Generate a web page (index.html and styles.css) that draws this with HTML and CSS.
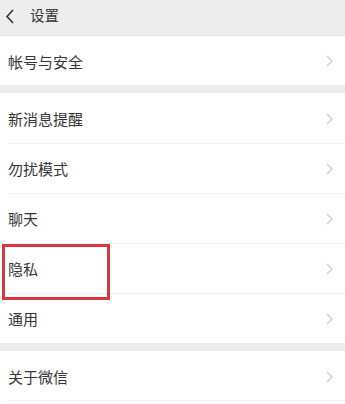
FILE: index.html
```html
<!DOCTYPE html>
<html lang="zh-CN">
<head>
<meta charset="utf-8">
<link rel="stylesheet" href="styles.css">
</head>
<body>
<header class="topbar">
  <svg class="back" width="10" height="15" viewBox="0 0 10 15"><polyline points="8,1 2,7.5 8,14" fill="none" stroke="#333" stroke-width="1.6"/></svg>
  <span class="title">设置</span>
</header>
<section class="group first">
  <div class="row"><span class="label">帐号与安全</span><svg class="chev" width="7" height="12" viewBox="0 0 7 12"><polyline points="1,1 6,6 1,11" fill="none" stroke="#cfcfcf" stroke-width="1.3"/></svg></div>
</section>
<section class="group">
  <div class="row"><span class="label">新消息提醒</span><svg class="chev" width="7" height="12" viewBox="0 0 7 12"><polyline points="1,1 6,6 1,11" fill="none" stroke="#cfcfcf" stroke-width="1.3"/></svg></div>
  <div class="row"><span class="label">勿扰模式</span><svg class="chev" width="7" height="12" viewBox="0 0 7 12"><polyline points="1,1 6,6 1,11" fill="none" stroke="#cfcfcf" stroke-width="1.3"/></svg></div>
  <div class="row"><span class="label">聊天</span><svg class="chev" width="7" height="12" viewBox="0 0 7 12"><polyline points="1,1 6,6 1,11" fill="none" stroke="#cfcfcf" stroke-width="1.3"/></svg></div>
  <div class="row marked"><span class="label">隐私</span><svg class="chev" width="7" height="12" viewBox="0 0 7 12"><polyline points="1,1 6,6 1,11" fill="none" stroke="#cfcfcf" stroke-width="1.3"/></svg><span class="highlight"></span></div>
  <div class="row"><span class="label">通用</span><svg class="chev" width="7" height="12" viewBox="0 0 7 12"><polyline points="1,1 6,6 1,11" fill="none" stroke="#cfcfcf" stroke-width="1.3"/></svg></div>
</section>
<section class="group last">
  <div class="row"><span class="label">关于微信</span><svg class="chev" width="7" height="12" viewBox="0 0 7 12"><polyline points="1,1 6,6 1,11" fill="none" stroke="#cfcfcf" stroke-width="1.3"/></svg></div>
</section>
</body>
</html>
```
FILE: styles.css
```css
html, body {
  margin: 0;
  padding: 0;
}
body {
  background: #ededed;
  font-family: "Noto Sans CJK SC", "Noto Sans", sans-serif;
  color: #353535;
  width: 345px;
  height: 404px;
  overflow: hidden;
}
.topbar {
  height: 36px;
  display: flex;
  align-items: center;
  padding-left: 5px;
  box-sizing: border-box;
  border-bottom: 1px solid #e4e4e4;
}
.back {
  display: block;
  margin-top: -2px;
}
.title {
  margin-left: 15px;
  font-size: 14.5px;
  line-height: 1;
  margin-top: -4px;
}
.group {
  background: #fff;
  margin-bottom: 8px;
}
.group.last {
  margin-bottom: 0;
  padding-bottom: 3px;
}
.row {
  position: relative;
  height: 50px;
  display: flex;
  align-items: center;
  justify-content: space-between;
  padding: 1px 12px 0 8px;
  box-sizing: border-box;
}
.first .row {
  height: 49px;
}
.row + .row::before {
  content: "";
  position: absolute;
  left: 8px;
  right: 0;
  top: 0;
  border-top: 1px solid #f0f0f0;
}
.last .row::after {
  content: "";
  position: absolute;
  left: 8px;
  right: 0;
  bottom: 0;
  border-top: 1px solid #f0f0f0;
}
.label {
  font-size: 15px;
  line-height: 1;
}
.chev {
  display: block;
}
.highlight {
  position: absolute;
  left: 2px;
  top: 1px;
  width: 108px;
  height: 56px;
  border: 3px solid #d9393a;
  box-sizing: border-box;
  z-index: 2;
}
```
